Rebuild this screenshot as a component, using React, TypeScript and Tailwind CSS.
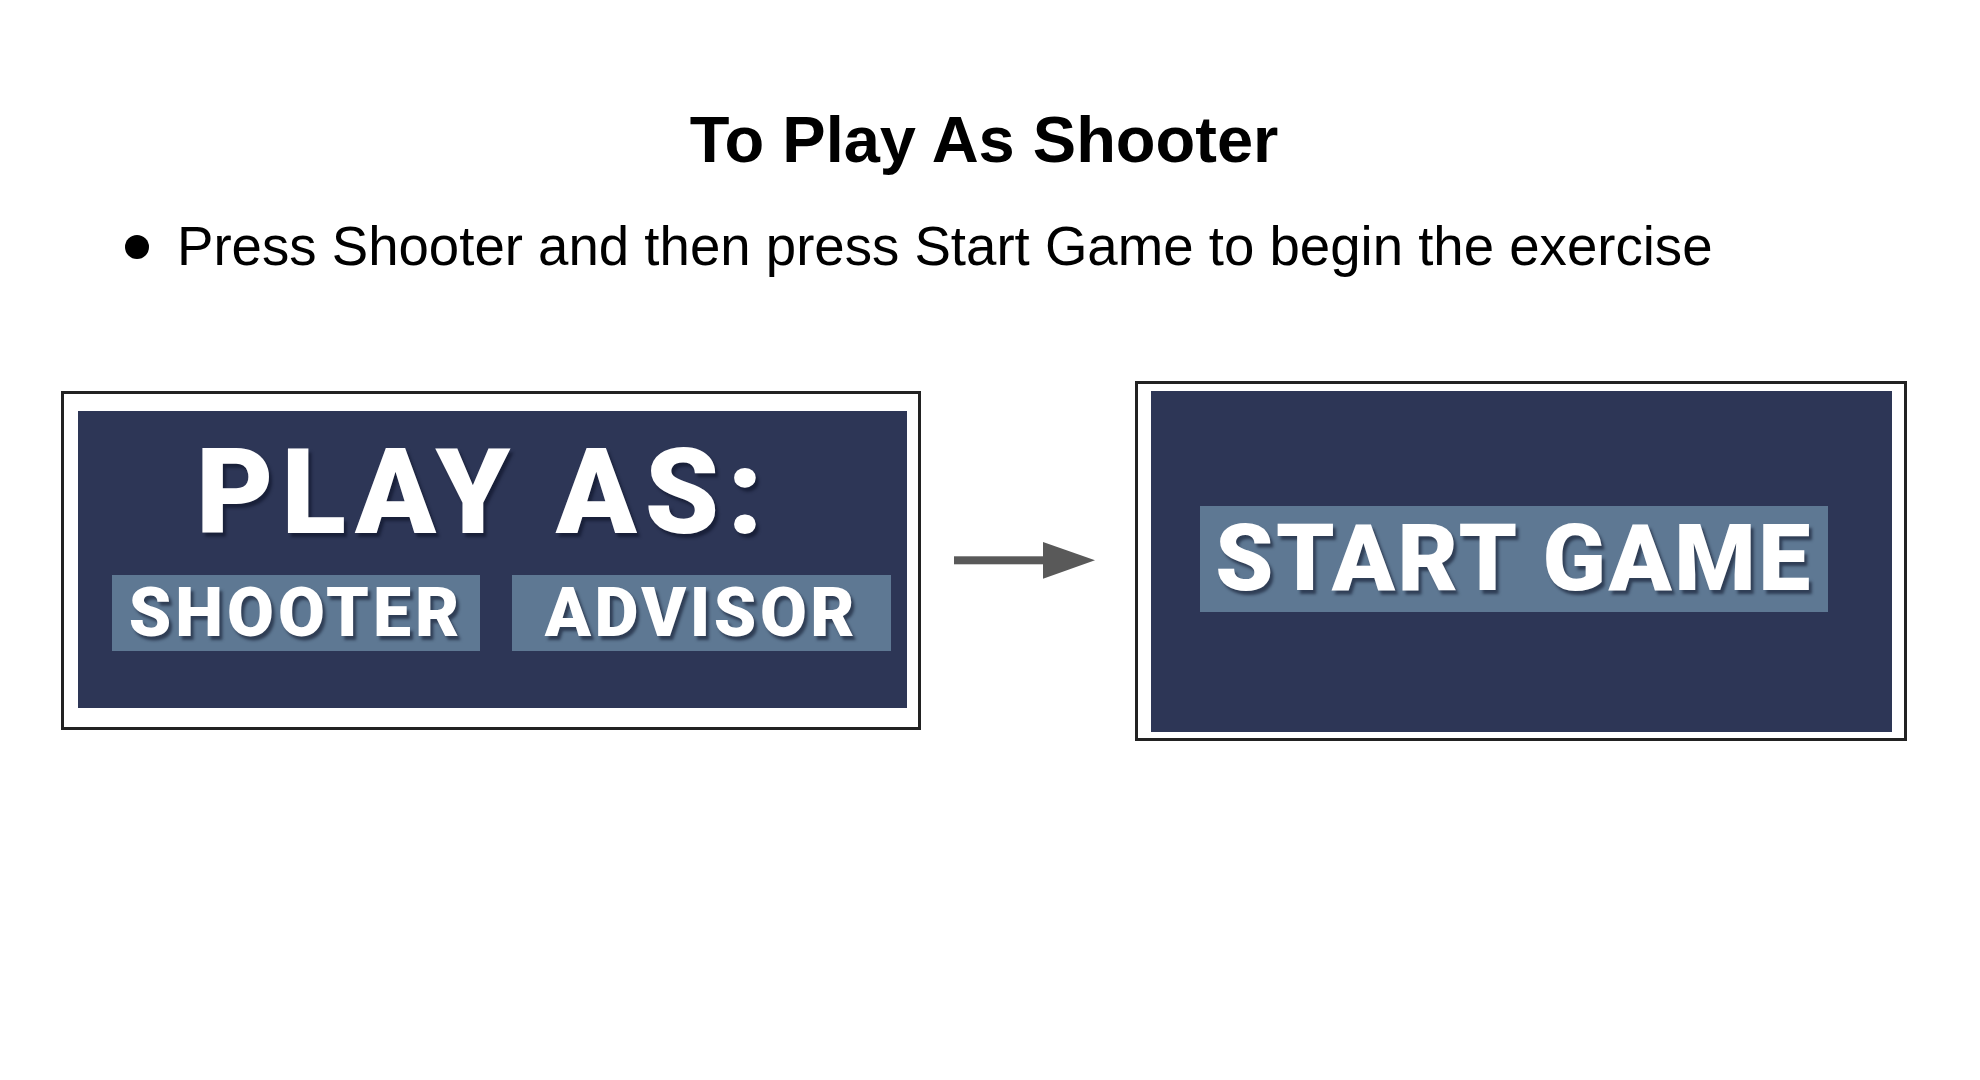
const gameText =
  "font-['Roboto','Liberation_Sans',sans-serif] font-black leading-none text-white [text-shadow:3px_4px_3px_rgba(10,15,35,0.55)]";

const ArrowRight = () => (
  <svg width="141" height="37" viewBox="0 0 141 37" className="shrink-0 ml-[33px] mr-[40px]">
    <rect x="0" y="14.3" width="90" height="8" fill="#595959" />
    <polygon points="89,0 141,18.3 89,36.7" fill="#595959" />
  </svg>
);

const PlayAsPanel = () => (
  <div className="border-[3px] border-[#222222] bg-white pl-[14px] pr-[11px] pt-[17px] pb-[19px]">
    <div className="w-[829px] h-[297px] bg-[#2d3656] flex flex-col">
      <div className={`${gameText} pt-[22px] pr-[18px] text-center text-[119px] tracking-[8px]`}>
        PLAY AS:
      </div>
      <div className="flex gap-[32px] pl-[34px] mt-[23px]">
        <div className="w-[368px] h-[76px] bg-[#5e7893] flex items-center justify-center">
          <span className={`${gameText} text-[68px] tracking-[4px]`}>SHOOTER</span>
        </div>
        <div className="w-[379px] h-[76px] bg-[#5e7893] flex items-center justify-center">
          <span className={`${gameText} text-[68px] tracking-[3.5px]`}>ADVISOR</span>
        </div>
      </div>
    </div>
  </div>
);

const StartPanel = () => (
  <div className="border-[3px] border-[#222222] bg-white pl-[13px] pr-[12px] pt-[7px] pb-[6px]">
    <div className="w-[741px] h-[341px] bg-[#2d3656] flex items-center justify-center pr-[15px] pb-[5px]">
      <div className="w-[628px] h-[106px] bg-[#5e7893] flex items-center justify-center">
        <span className={`${gameText} text-[93px] tracking-[2.5px]`}>START GAME</span>
      </div>
    </div>
  </div>
);

export default function App() {
  return (
    <div className="w-[1980px] h-[1080px] bg-white overflow-hidden font-['Liberation_Sans',Arial,sans-serif] text-black">
      <h1 className="pt-[107px] pr-[12px] text-center text-[65px] font-bold leading-none">
        To Play As Shooter
      </h1>
      <div className="flex items-center mt-[48px] pl-[125px]">
        <span className="w-[24px] h-[24px] rounded-full bg-black shrink-0" />
        <p className="ml-[28px] text-[54.6px] leading-none">
          Press Shooter and then press Start Game to begin the exercise
        </p>
      </div>
      <div className="flex items-center pl-[61px] mt-[106px]">
        <PlayAsPanel />
        <ArrowRight />
        <StartPanel />
      </div>
    </div>
  );
}
